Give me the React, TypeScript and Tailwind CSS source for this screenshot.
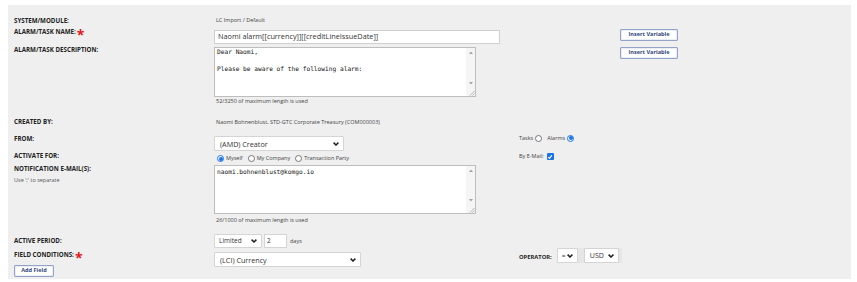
import React from "react";

const sans = { fontFamily: '"Open Sans", "Liberation Sans", sans-serif' };
const mono = { fontFamily: '"DejaVu Sans Mono", "Liberation Mono", monospace' };

function Label({ children, star }: { children: React.ReactNode; star?: boolean }) {
  return (
    <div className="text-[6.2px] leading-[8px] font-bold text-[#222] flex items-center whitespace-nowrap">
      {children}
      {star && <span className="text-[#e8141b] text-[14px] leading-[8px] ml-[1px] relative top-[3px]">*</span>}
    </div>
  );
}

function Chevron() {
  return (
    <svg width="6" height="4" viewBox="0 0 6 4" className="shrink-0">
      <path d="M0.6 0.6 L3 3 L5.4 0.6" fill="none" stroke="#222" strokeWidth="1.5" />
    </svg>
  );
}

function Select({ w, h, text, size = "7px", pad = "5px" }: { w: number; h: number; text: string; size?: string; pad?: string }) {
  return (
    <div
      className="bg-white border border-[#d4d4d4] rounded-[1px] flex items-center justify-between pr-[4px] text-[#333]"
      style={{ width: w, height: h, paddingLeft: pad, fontSize: size }}
    >
      <span className="leading-[10px]">{text}</span>
      <Chevron />
    </div>
  );
}

function Btn({ children, w }: { children: React.ReactNode; w: number }) {
  return (
    <div
      className="h-[12px] bg-white border border-[#94a4c8] rounded-[1px] flex items-center justify-center text-[5.6px] font-bold text-[#33487c] leading-none"
      style={{ width: w, boxShadow: "inset 0 0 0 0.5px #d6dced" }}
    >
      {children}
    </div>
  );
}

function TextArea({ h, pt, lines }: { h: number; pt: number; lines: string[] }) {
  return (
    <div className="w-[262px] bg-white border border-[#bdbdbd] flex" style={{ height: h }}>
      <div className="flex-1 pl-[2px] text-[6.2px] leading-[8.5px] text-[#111]" style={{ ...mono, paddingTop: pt }}>
        {lines.map((l, i) => (
          <div key={i} className="h-[8.5px] whitespace-pre">{l}</div>
        ))}
      </div>
      <div className="w-[9px] bg-[#f5f5f5] flex flex-col items-center">
        <div className="flex-1 flex flex-col items-center justify-between pt-[3px] pb-[3px]">
          <svg width="4" height="3" viewBox="0 0 4 3"><path d="M0 3 L2 0.5 L4 3Z" fill="#a3a3a3" /></svg>
          <svg width="4" height="3" viewBox="0 0 4 3"><path d="M0 0 L2 2.5 L4 0Z" fill="#a3a3a3" /></svg>
        </div>
        <div className="w-[9px] h-[8px] flex items-end justify-end">
          <svg width="6" height="6" viewBox="0 0 6 6"><path d="M5.5 1 L1 5.5 M5.5 3.5 L3.5 5.5" stroke="#9a9a9a" strokeWidth="0.7" /></svg>
        </div>
      </div>
    </div>
  );
}

function Radio({ checked }: { checked?: boolean }) {
  return checked ? (
    <span className="inline-flex w-[7px] h-[7px] rounded-full border border-[#1a73e8] bg-white items-center justify-center shrink-0">
      <span className="w-[4px] h-[4px] rounded-full bg-[#1a73e8]" />
    </span>
  ) : (
    <span className="inline-block w-[7px] h-[7px] rounded-full border border-[#767676] bg-white shrink-0" />
  );
}

function Checkbox() {
  return (
    <span className="inline-flex w-[7px] h-[7px] rounded-[1px] bg-[#1a73e8] items-center justify-center shrink-0">
      <svg width="6" height="6" viewBox="0 0 6 6"><path d="M1.2 3.2 L2.5 4.4 L4.8 1.4" fill="none" stroke="white" strokeWidth="1.1" /></svg>
    </span>
  );
}

export default function App() {
  return (
    <div className="w-[857px] h-[282px] bg-white" style={sans}>
      <div className="ml-[8px] mt-[5px] w-[843px] h-[274px] bg-[#efefef] pl-[6px] pt-[10px]">
        {/* SYSTEM/MODULE */}
        <div className="flex h-[13px]">
          <div className="w-[200px] pt-[2px]"><Label>SYSTEM/MODULE:</Label></div>
          <div className="pl-[2px] pt-[1px] text-[5.5px] leading-[8px] text-[#444]">LC Import / Default</div>
        </div>
        {/* NAME */}
        <div className="flex h-[18px]">
          <div className="w-[200px]"><Label star>ALARM/TASK NAME:</Label></div>
          <div className="w-[305px] pt-[2px]">
            <div className="w-[286px] h-[14px] bg-white border border-[#cfcfcf] flex items-center pl-[3px] text-[7.3px] text-[#333] leading-none">
              Naomi alarm[[currency]][[creditLineIssueDate]]
            </div>
          </div>
          <div className="pl-[101px] pt-[1px]"><Btn w={58}>Insert Variable</Btn></div>
        </div>
        {/* DESCRIPTION */}
        <div className="flex h-[59px]">
          <div className="w-[200px]"><Label>ALARM/TASK DESCRIPTION:</Label></div>
          <div className="w-[305px] pt-[1px]">
            <TextArea h={50} pt={0} lines={["Dear Naomi,", "", "Please be aware of the following alarm:"]} />
            <div className="pl-[2px] text-[5.5px] leading-[8px] text-[#444]">52/3250 of maximum length is used</div>
          </div>
          <div className="pl-[101px] pt-[1px]"><Btn w={58}>Insert Variable</Btn></div>
        </div>
        {/* CREATED BY */}
        <div className="flex h-[8px] mt-[13px]">
          <div className="w-[200px]"><Label>CREATED BY:</Label></div>
          <div className="pl-[2px] text-[5.5px] leading-[8px] text-[#444]">Naomi Bohnenblust, STD-GTC Corporate Treasury (COM000003)</div>
        </div>
        {/* FROM */}
        <div className="flex h-[17px] mt-[9px]">
          <div className="w-[200px]"><Label>FROM:</Label></div>
          <div className="w-[305px] pt-[1px]">
            <Select w={130} h={15} text="(AMD) Creator" size="7.2px" />
          </div>
          <div className="flex items-center gap-[2px] h-[8px] -mt-[1px] text-[5.5px] text-[#444]">
            <span>Tasks</span>
            <Radio />
            <span className="ml-[3px]">Alarms</span>
            <Radio checked />
          </div>
        </div>
        {/* ACTIVATE FOR */}
        <div className="flex h-[13px]">
          <div className="w-[200px]"><Label>ACTIVATE FOR:</Label></div>
          <div className="w-[305px] pt-[2px] pl-[3px] flex items-center gap-[2px] h-[11px] text-[5.5px] text-[#444]">
            <Radio checked />
            <span>Myself</span>
            <span className="w-[1px]" />
            <Radio />
            <span>My Company</span>
            <span className="w-[1px]" />
            <Radio />
            <span>Transaction Party</span>
          </div>
          <div className="flex items-center gap-[3px] h-[8px] pt-[1px] text-[5.5px] text-[#444]">
            <span>By E-Mail:</span>
            <Checkbox />
          </div>
        </div>
        {/* NOTIFICATION */}
        <div className="flex h-[66px]">
          <div className="w-[200px]">
            <Label>NOTIFICATION E-MAIL(S):</Label>
            <div className="mt-[3px] text-[5.5px] leading-[8px] text-[#555]">Use ';' to separate</div>
          </div>
          <div className="w-[305px]">
            <TextArea h={49} pt={2} lines={["naomi.bohnenblust@komgo.io"]} />
            <div className="pl-[2px] mt-[2px] text-[5.5px] leading-[8px] text-[#444]">26/1000 of maximum length is used</div>
          </div>
        </div>
        {/* ACTIVE PERIOD */}
        <div className="flex h-[14px] mt-[3px]">
          <div className="w-[200px] pt-[3px]"><Label>ACTIVE PERIOD:</Label></div>
          <div className="flex items-center gap-[2px]">
            <Select w={48} h={14} text="Limited" size="6.5px" pad="4px" />
            <div className="w-[23px] h-[14px] bg-white border border-[#d4d4d4] text-[6.5px] text-[#333] pl-[2px] flex items-center">2</div>
            <span className="text-[5.5px] text-[#444] ml-[1px]">days</span>
          </div>
        </div>
        {/* FIELD CONDITIONS */}
        <div className="flex h-[30px]">
          <div className="w-[200px] pt-[3px]">
            <Label star>FIELD CONDITIONS:</Label>
            <div className="mt-[6px]"><Btn w={40}>Add Field</Btn></div>
          </div>
          <div className="w-[305px] pt-[4px]">
            <Select w={147} h={15} text="(LCI) Currency" size="7.2px" />
          </div>
          <div className="flex items-start">
            <div className="pt-[5px] text-[5.8px] font-bold leading-[8px] text-[#222]">OPERATOR:</div>
            <div className="ml-[5px] flex bg-[#e6e6e6] pr-[3px]">
              <Select w={21} h={15} text="=" size="6.5px" pad="4px" />
              <div className="w-[6px]" />
              <Select w={35} h={15} text="USD" size="7px" pad="5px" />
            </div>
          </div>
        </div>
      </div>
    </div>
  );
}
